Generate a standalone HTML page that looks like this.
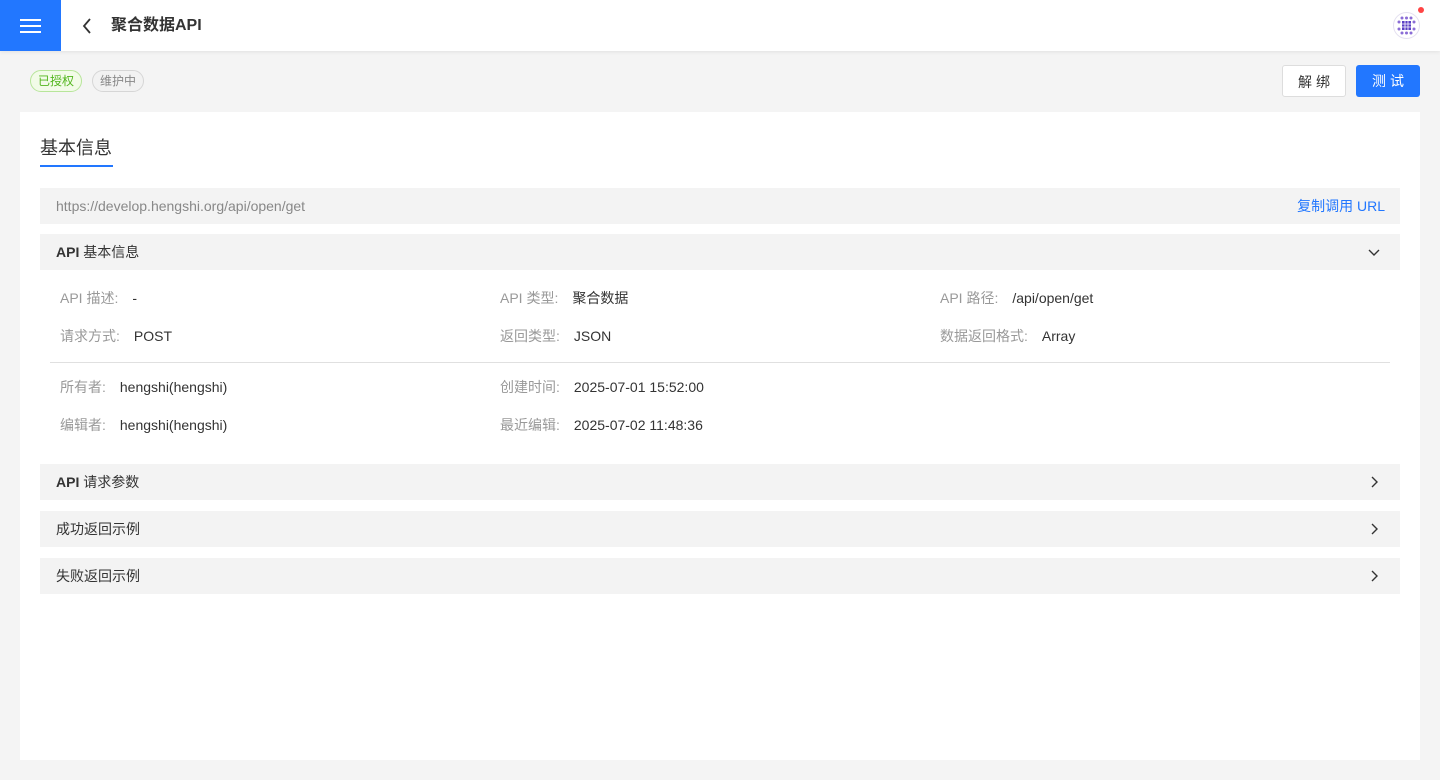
<!DOCTYPE html>
<html><head><meta charset="utf-8"><style>
*{box-sizing:border-box;margin:0;padding:0}
body{width:1440px;height:780px;background:#f4f4f4;font-family:"Liberation Sans","Noto Sans CJK SC",sans-serif;position:relative;overflow:hidden;color:#333}
.top{position:absolute;left:0;top:0;width:1440px;height:51px;background:#fff;box-shadow:0 1px 4px rgba(0,0,0,.08)}
.menu{position:absolute;left:0;top:0;width:61px;height:51px;background:#2277ff}
.menu i{position:absolute;left:20px;width:21px;height:2px;background:#fff}
.title{position:absolute;left:111px;top:16px;font-size:16px;font-weight:bold;color:#333;line-height:20px}
.back{position:absolute;left:82px;top:18px}
.tag{position:absolute;top:70px;height:22px;border-radius:11px;font-size:12px;line-height:20px;padding:0 7px}
.btn{position:absolute;top:65px;height:32px;width:64px;border-radius:3px;font-size:14px;line-height:32px;text-align:center;letter-spacing:4px;text-indent:4px}
.card{position:absolute;left:20px;top:112px;width:1400px;height:648px;background:#fff}
.h{position:absolute;left:20px;top:22px;font-size:18px;color:#333}
.ul{position:absolute;left:20px;top:53px;width:73px;height:2px;background:#2277ff}
.bar{position:absolute;left:20px;width:1360px;height:36px;background:#f3f3f3;font-size:14px;line-height:36px;padding-left:16px}
.arr{position:absolute;right:20px;top:12px}
.lbl{position:absolute;font-size:14px;color:#999}
.lbl b{font-weight:normal;color:#333;margin-left:14px}
</style></head><body>
<div class="top">
<div class="menu"><i style="top:19px"></i><i style="top:25px"></i><i style="top:31px"></i></div>
<svg class="back" width="10" height="16" viewBox="0 0 10 16"><path d="M8 1L2 8l6 7" fill="none" stroke="#333" stroke-width="1.8"/></svg>
<div class="title">聚合数据API</div>
<div style="position:absolute;left:1393px;top:12px;width:27px;height:27px;border-radius:50%;border:1px solid #e4e0f0;background:#fff">
<svg width="25" height="25" viewBox="0 0 25 25"><g fill="#8a6cd6"><circle cx="8" cy="5" r="1.5"/><circle cx="12.5" cy="5" r="1.5"/><circle cx="17" cy="5" r="1.5"/><circle cx="5" cy="9" r="1.5"/><circle cx="20" cy="9" r="1.5"/><circle cx="5" cy="16" r="1.5"/><circle cx="20" cy="16" r="1.5"/><circle cx="8" cy="20" r="1.5"/><circle cx="12.5" cy="20" r="1.5"/><circle cx="17" cy="20" r="1.5"/></g><rect x="8" y="8" width="9" height="9" fill="#5b3fc4"/><path d="M11 8v9M14 8v9M8 11h9M8 14h9" stroke="#fff" stroke-width=".8"/></svg></div>
<div style="position:absolute;left:1418px;top:7px;width:6px;height:6px;border-radius:50%;background:#f44"></div>
</div>
<div class="tag" style="left:30px;background:#f2fbe8;border:1px solid #b7e59a;color:#52b61e">已授权</div>
<div class="tag" style="left:92px;background:#f2f2f2;border:1px solid #d6d6d6;color:#888">维护中</div>
<div class="btn" style="left:1282px;background:#fff;border:1px solid #ddd;color:#333">解绑</div>
<div class="btn" style="left:1356px;background:#2277ff;color:#fff">测试</div>
<div class="card">
<div class="h">基本信息</div><div class="ul"></div>
<div class="bar" style="top:76px;color:#888">https://develop.hengshi.org/api/open/get<span style="position:absolute;right:15px;color:#2277ff">复制调用 URL</span></div>
<div class="bar" style="top:122px;font-weight:bold;color:#333">API <span style="font-weight:normal">基本信息</span><svg class="arr" width="12" height="12" viewBox="0 0 12 12"><path d="M1 4l5 5 5-5" fill="none" stroke="#333" stroke-width="1.4"/></svg></div>
<div class="lbl" style="left:40px;top:176px">API 描述:<b>-</b></div>
<div class="lbl" style="left:480px;top:176px">API 类型:<b>聚合数据</b></div>
<div class="lbl" style="left:920px;top:176px">API 路径:<b>/api/open/get</b></div>
<div class="lbl" style="left:40px;top:214px">请求方式:<b>POST</b></div>
<div class="lbl" style="left:480px;top:214px">返回类型:<b>JSON</b></div>
<div class="lbl" style="left:920px;top:214px">数据返回格式:<b>Array</b></div>
<div style="position:absolute;left:30px;top:250px;width:1340px;height:1px;background:#e0e0e0"></div>
<div class="lbl" style="left:40px;top:265px">所有者:<b>hengshi(hengshi)</b></div>
<div class="lbl" style="left:480px;top:265px">创建时间:<b>2025-07-01 15:52:00</b></div>
<div class="lbl" style="left:40px;top:303px">编辑者:<b>hengshi(hengshi)</b></div>
<div class="lbl" style="left:480px;top:303px">最近编辑:<b>2025-07-02 11:48:36</b></div>
<div class="bar" style="top:352px;font-weight:bold;color:#333">API <span style="font-weight:normal">请求参数</span><svg class="arr" width="12" height="12" viewBox="0 0 12 12"><path d="M4 1l5 5-5 5" fill="none" stroke="#333" stroke-width="1.4"/></svg></div>
<div class="bar" style="top:399px">成功返回示例<svg class="arr" width="12" height="12" viewBox="0 0 12 12"><path d="M4 1l5 5-5 5" fill="none" stroke="#333" stroke-width="1.4"/></svg></div>
<div class="bar" style="top:446px">失败返回示例<svg class="arr" width="12" height="12" viewBox="0 0 12 12"><path d="M4 1l5 5-5 5" fill="none" stroke="#333" stroke-width="1.4"/></svg></div>
</div>
</body></html>
